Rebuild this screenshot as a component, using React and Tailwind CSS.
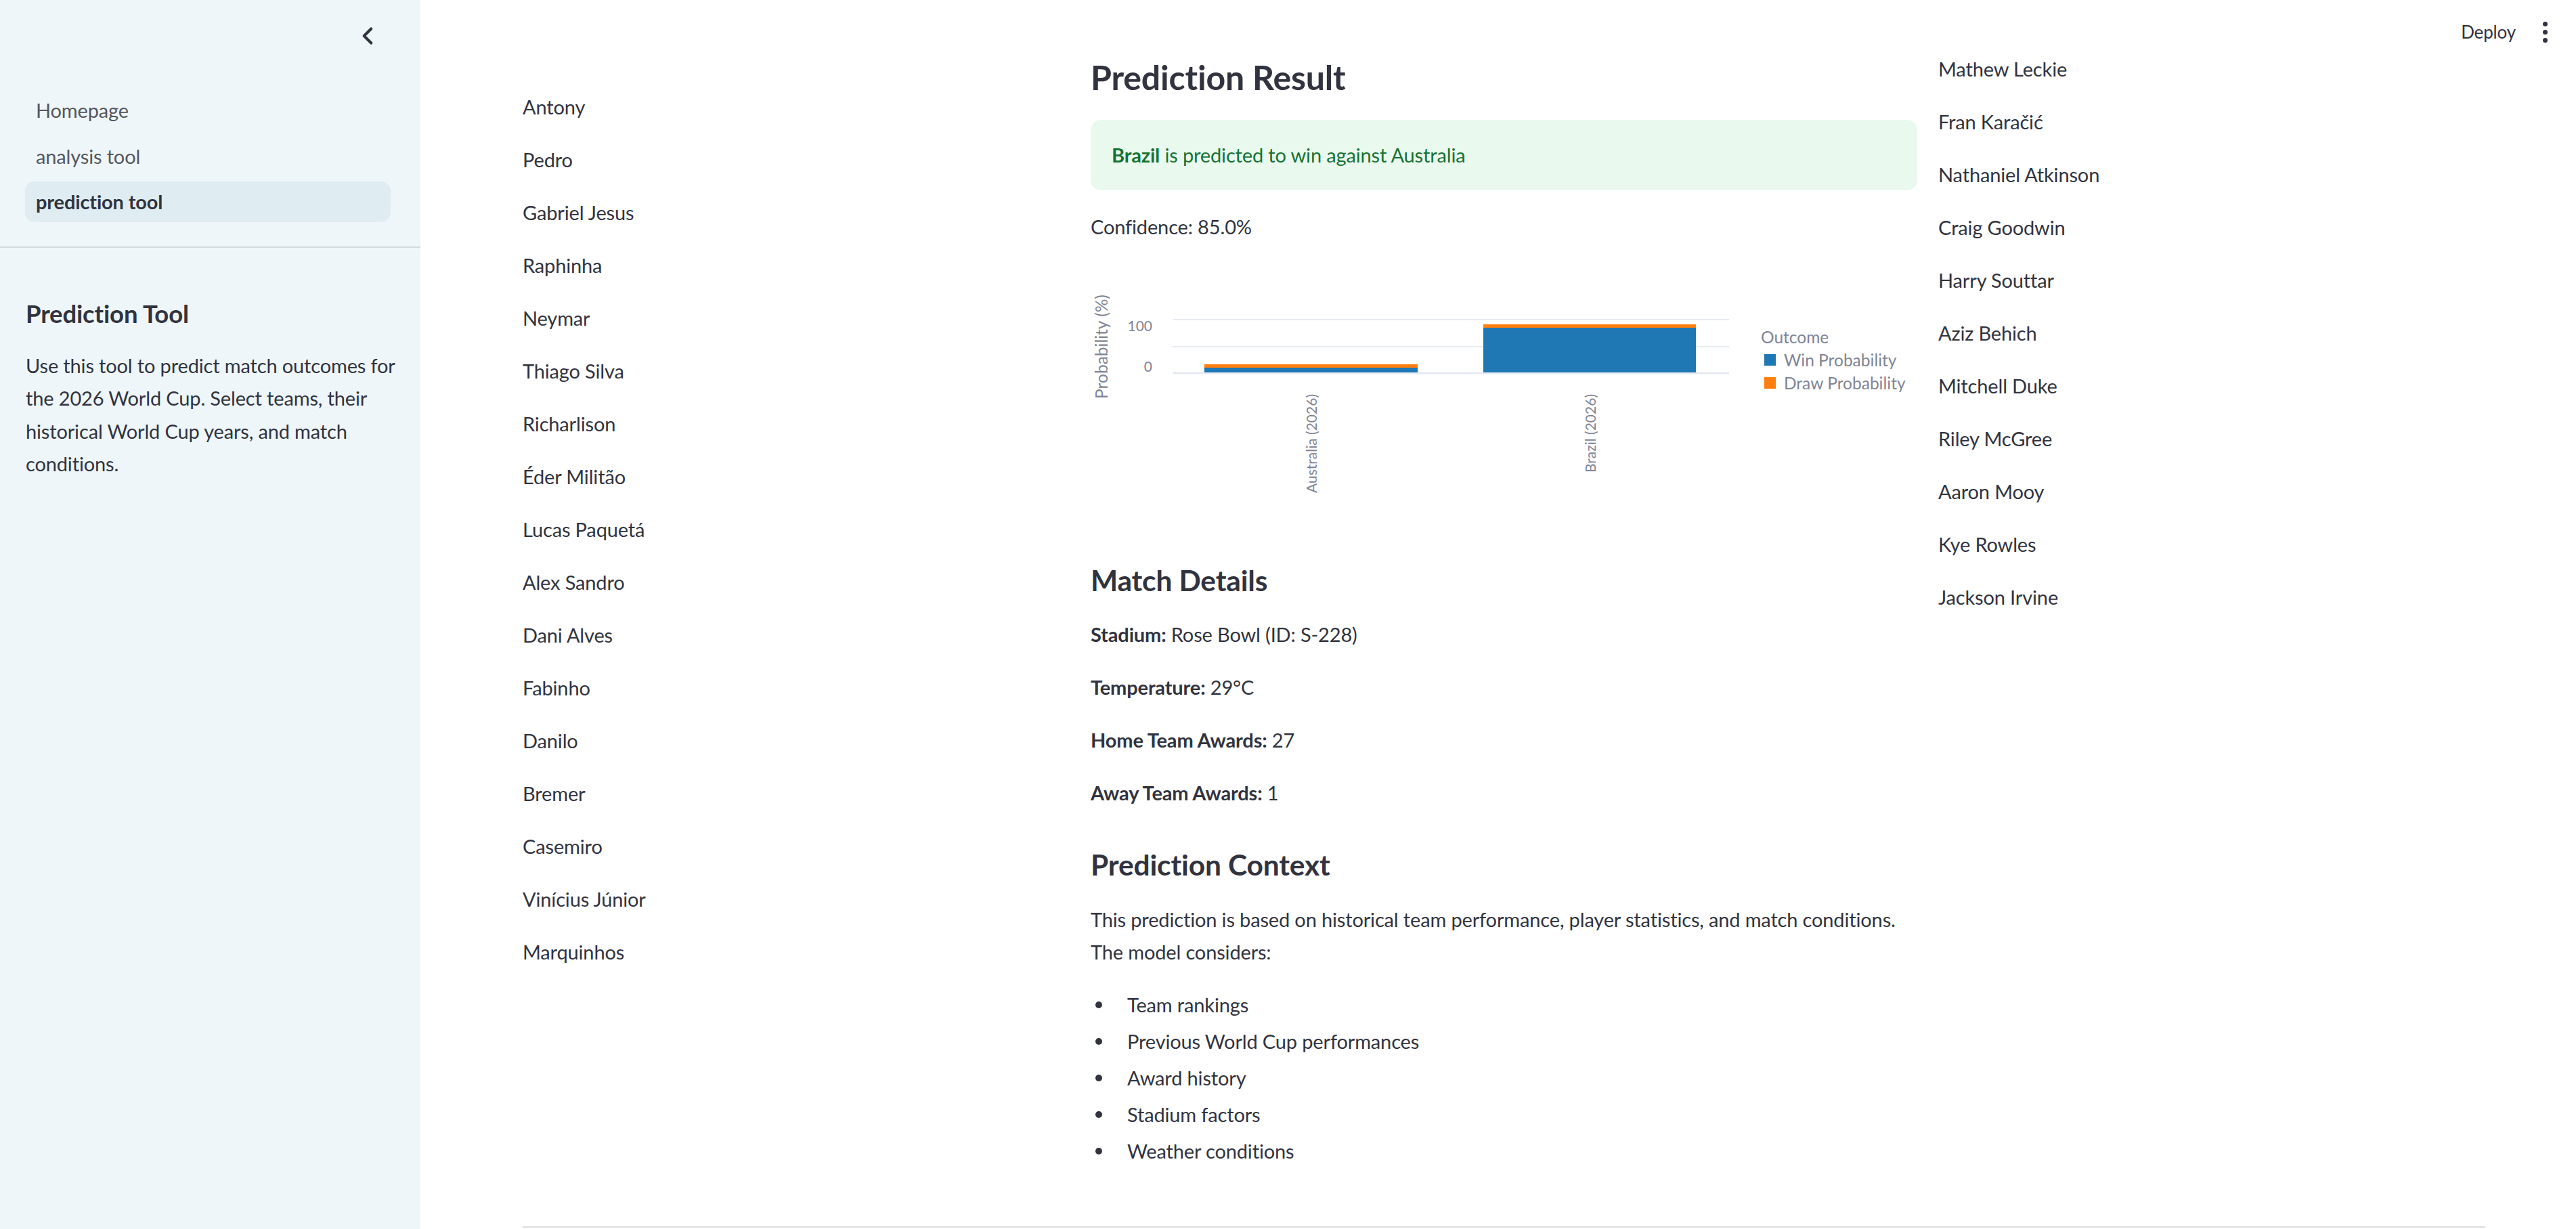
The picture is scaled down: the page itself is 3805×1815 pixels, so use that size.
import React from "react";
import { ChevronLeft } from "lucide-react";

const BRAZIL_PLAYERS = [
  "Antony",
  "Pedro",
  "Gabriel Jesus",
  "Raphinha",
  "Neymar",
  "Thiago Silva",
  "Richarlison",
  "Éder Militão",
  "Lucas Paquetá",
  "Alex Sandro",
  "Dani Alves",
  "Fabinho",
  "Danilo",
  "Bremer",
  "Casemiro",
  "Vinícius Júnior",
  "Marquinhos",
];

const AUSTRALIA_PLAYERS = [
  "Mathew Leckie",
  "Fran Karačić",
  "Nathaniel Atkinson",
  "Craig Goodwin",
  "Harry Souttar",
  "Aziz Behich",
  "Mitchell Duke",
  "Riley McGree",
  "Aaron Mooy",
  "Kye Rowles",
  "Jackson Irvine",
];

const MATCH_DETAILS = [
  { label: "Stadium:", value: "Rose Bowl (ID: S-228)" },
  { label: "Temperature:", value: "29°C" },
  { label: "Home Team Awards:", value: "27" },
  { label: "Away Team Awards:", value: "1" },
];

const FACTORS = [
  "Team rankings",
  "Previous World Cup performances",
  "Award history",
  "Stadium factors",
  "Weather conditions",
];

const NAV = [
  { label: "Homepage", active: false },
  { label: "analysis tool", active: false },
  { label: "prediction tool", active: true },
];

function PlayerList({ players }) {
  return (
    <div className="flex flex-col gap-[30px]">
      {players.map((name) => (
        <p key={name} className="h-[48px] leading-[48px] whitespace-nowrap">
          {name}
        </p>
      ))}
    </div>
  );
}

function OutcomeChart() {
  const axis = "#808495";
  const font = "Lato, sans-serif";
  return (
    <svg width="1221" height="440" viewBox="0 0 1221 440" className="block overflow-visible tracking-normal">
      <text
        transform="translate(15,153) rotate(-90)"
        textAnchor="middle"
        dominantBaseline="central"
        fontFamily={font}
        fontSize="24.5"
        fill={axis}
      >
        Probability (%)
      </text>
      <text x="91" y="121" textAnchor="end" dominantBaseline="central" fontFamily={font} fontSize="21" fill={axis}>
        100
      </text>
      <text x="91" y="181" textAnchor="end" dominantBaseline="central" fontFamily={font} fontSize="21" fill={axis}>
        0
      </text>
      <line x1="121" x2="943" y1="113" y2="113" stroke="#e6eaf1" strokeWidth="2" />
      <line x1="121" x2="943" y1="153" y2="153" stroke="#e6eaf1" strokeWidth="2" />
      <line x1="121" x2="943" y1="192" y2="192" stroke="#e6eaf1" strokeWidth="3" />

      <rect x="168" y="179" width="315" height="5" fill="#ff7f0e" />
      <rect x="168" y="184" width="315" height="7" fill="#1f77b4" />
      <rect x="580" y="120" width="314" height="5" fill="#ff7f0e" />
      <rect x="580" y="125" width="314" height="66" fill="#1f77b4" />

      <text
        transform="translate(325,223) rotate(-90)"
        textAnchor="end"
        dominantBaseline="central"
        fontFamily={font}
        fontSize="21"
        fill={axis}
      >
        Australia (2026)
      </text>
      <text
        transform="translate(737,223) rotate(-90)"
        textAnchor="end"
        dominantBaseline="central"
        fontFamily={font}
        fontSize="21"
        fill={axis}
      >
        Brazil (2026)
      </text>

      <text x="990" y="138" dominantBaseline="central" fontFamily={font} fontSize="24.5" fill={axis}>
        Outcome
      </text>
      <rect x="995" y="164" width="17" height="17" fill="#1f77b4" />
      <text x="1024" y="172" dominantBaseline="central" fontFamily={font} fontSize="24.5" fill={axis}>
        Win Probability
      </text>
      <rect x="995" y="198" width="17" height="17" fill="#ff7f0e" />
      <text x="1024" y="206" dominantBaseline="central" fontFamily={font} fontSize="24.5" fill={axis}>
        Draw Probability
      </text>
    </svg>
  );
}

export default function App() {
  return (
    <div className="flex w-full h-[1815px] overflow-hidden bg-white text-[#31333f] text-[29px] tracking-[-0.15px] [font-family:Lato,sans-serif]">
      <aside className="w-[621px] shrink-0 bg-[#eef6f9] flex flex-col">
        <div className="h-[106px] flex items-center justify-end pr-[57px]">
          <ChevronLeft size={42} strokeWidth={2.4} className="text-[#31333f]" />
        </div>

        <nav className="mt-[27px] ml-[37px] mr-[44px] flex flex-col gap-[7.5px]">
          {NAV.map((item) => (
            <div
              key={item.label}
              className={
                item.active
                  ? "h-[60px] flex items-center pl-[16px] rounded-[14px] bg-[#dfedf2] font-bold text-[#31333f]"
                  : "h-[60px] flex items-center pl-[16px] rounded-[14px] text-[#55575f]"
              }
            >
              {item.label}
            </div>
          ))}
        </nav>

        <div className="mt-[36px] h-[2px] bg-[#d3dadd]" />

        <div className="px-[38px]">
          <h3 className="mt-[77px] h-[41px] leading-[41px] text-[36.5px] font-bold">Prediction Tool</h3>
          <p className="mt-[32px] leading-[48.4px] whitespace-nowrap">
            Use this tool to predict match outcomes for
            <br />
            the 2026 World Cup. Select teams, their
            <br />
            historical World Cup years, and match
            <br />
            conditions.
          </p>
        </div>
      </aside>

      <main className="relative flex-1 pl-[151px] pr-[134px]">
        <div className="absolute top-0 right-0 h-[94px] flex items-center gap-[40px] pr-[42px]">
          <span className="text-[26px] text-[#31333f]">Deploy</span>
          <div className="flex flex-col gap-[5px]">
            <span className="w-[7px] h-[7px] rounded-full bg-[#31333f]" />
            <span className="w-[7px] h-[7px] rounded-full bg-[#31333f]" />
            <span className="w-[7px] h-[7px] rounded-full bg-[#31333f]" />
          </div>
        </div>

        <div className="grid grid-cols-[808px_1221px_808px] gap-[31px] h-[1811px]">
          <div className="pt-[134px]">
            <PlayerList players={BRAZIL_PLAYERS} />
          </div>

          <div className="pt-[87px] flex flex-col">
            <h2 className="h-[54px] leading-[54px] text-[50px] font-bold">Prediction Result</h2>

            <div className="mt-[36px] h-[104px] rounded-[15px] bg-[#e9f9ee] px-[31px] flex items-center text-[#177233]">
              <p>
                <span className="font-bold">Brazil</span> is predicted to win against Australia
              </p>
            </div>

            <p className="mt-[30px] h-[48px] leading-[48px]">Confidence: 85.0%</p>

            <OutcomeChart />

            <h3 className="mt-[31px] h-[54px] leading-[54px] text-[42.5px] font-bold">Match Details</h3>

            <div className="mt-[29px] flex flex-col gap-[30px]">
              {MATCH_DETAILS.map((d) => (
                <p key={d.label} className="h-[48px] leading-[48px]">
                  <span className="font-bold">{d.label}</span> {d.value}
                </p>
              ))}
            </div>

            <h3 className="mt-[55px] h-[54px] leading-[54px] text-[42.5px] font-bold">Prediction Context</h3>

            <p className="mt-[30px] leading-[48px] whitespace-nowrap">
              This prediction is based on historical team performance, player statistics, and match conditions.
              <br />
              The model considers:
            </p>

            <ul className="mt-[30px] flex flex-col gap-[6px]">
              {FACTORS.map((f) => (
                <li key={f} className="h-[48px] flex items-center">
                  <span className="w-[54px] pl-[7px] shrink-0 flex">
                    <span className="w-[10px] h-[10px] rounded-full bg-[#31333f]" />
                  </span>
                  <span>{f}</span>
                </li>
              ))}
            </ul>
          </div>

          <div className="pt-[78px]">
            <PlayerList players={AUSTRALIA_PLAYERS} />
          </div>
        </div>

        <div className="h-[2px] bg-[#dcdde1]" />
      </main>
    </div>
  );
}
